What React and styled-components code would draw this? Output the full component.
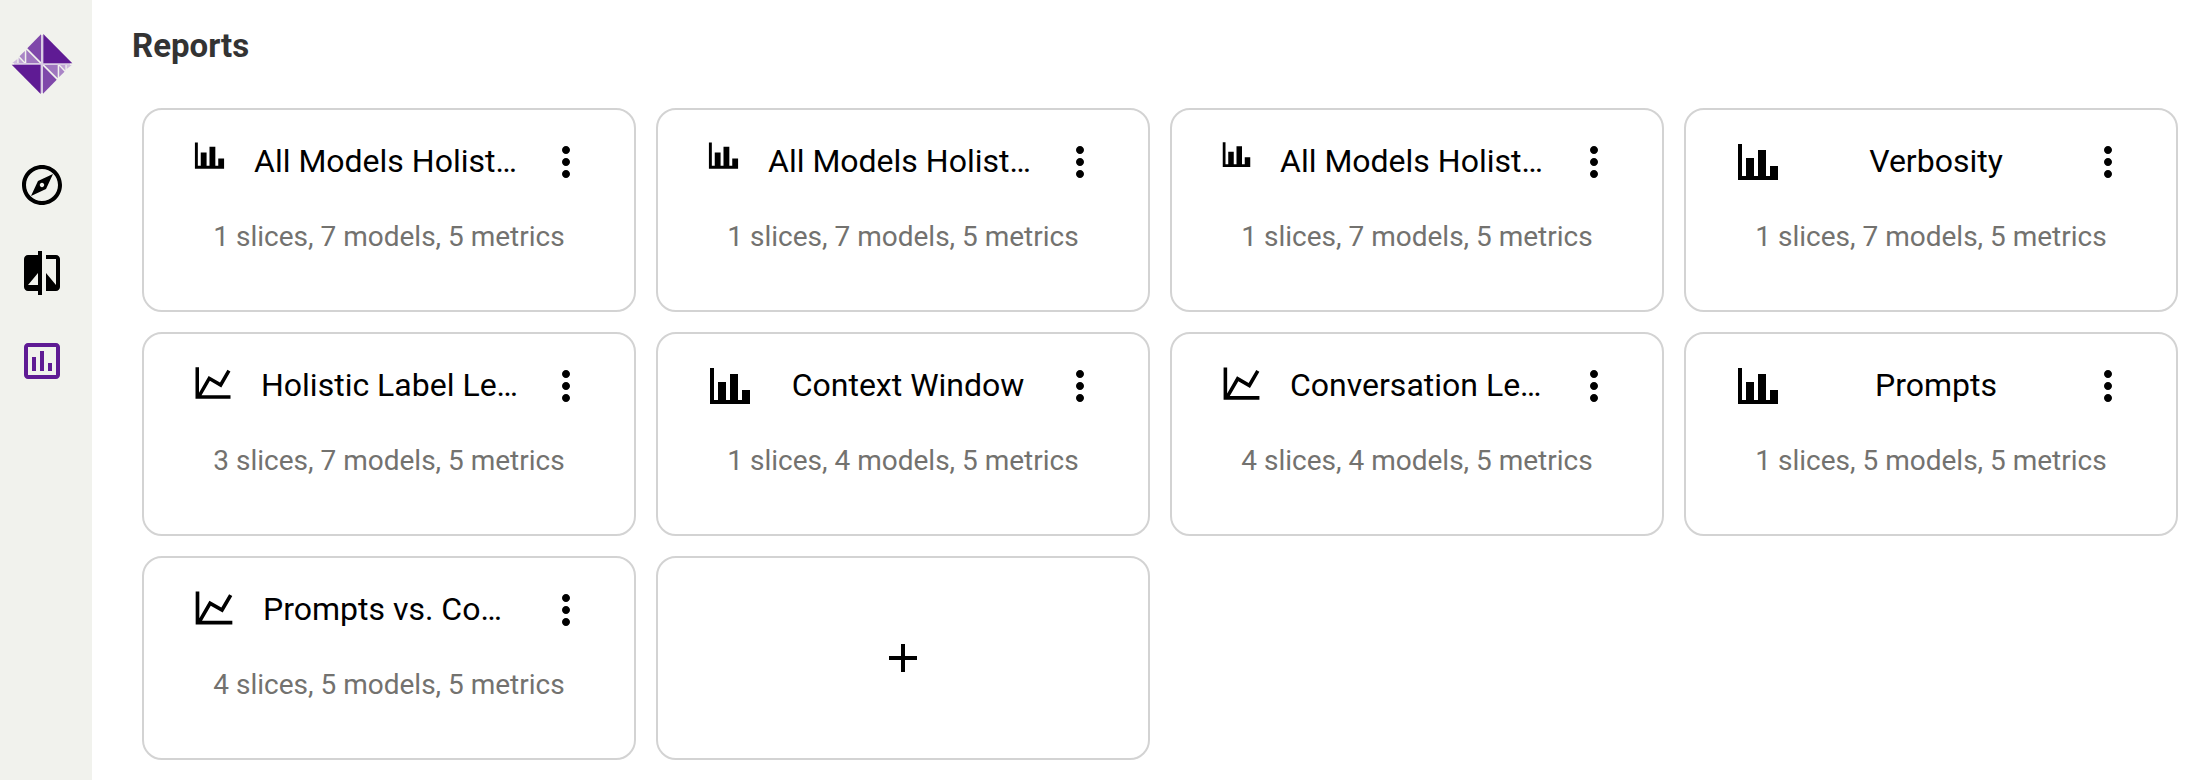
import React from "react";
import styled, { createGlobalStyle } from "styled-components";

const GlobalStyle = createGlobalStyle`
  * { box-sizing: border-box; }
  body {
    margin: 0;
    background: #ffffff;
    color: #000000;
    font-family: Roboto, "Liberation Sans", sans-serif;
  }
`;

const Page = styled.div`
  display: flex;
  min-height: 100vh;
`;

const Sidebar = styled.nav`
  flex: 0 0 92px;
  display: flex;
  flex-direction: column;
  align-items: center;
  padding: 32px 8px 0 0;
  background: #f1f2ed;
`;

const LogoLink = styled.a`
  display: block;
  height: 64px;
  margin-bottom: 65px;
`;

const NavList = styled.div`
  display: flex;
  flex-direction: column;
  gap: 40px;
`;

const NavLink = styled.a`
  display: block;
  height: 48px;
  color: ${(p) => (p.$active ? "#5f1b94" : "#000000")};
`;

const Main = styled.main`
  flex: 1;
  min-width: 0;
  padding: 28px 22px 20px 40px;
`;

const Heading = styled.h1`
  margin: 0 0 44px;
  color: #333333;
  font-size: 33px;
  font-weight: 700;
  line-height: 36px;
`;

const CardGrid = styled.div`
  display: grid;
  grid-template-columns: repeat(auto-fill, minmax(420px, 1fr));
  gap: 20px;
  padding-left: 10px;
`;

const Card = styled.article`
  min-height: 204px;
  padding: 28px 44px 28px 48px;
  border: 2px solid #d3d3d3;
  border-radius: 20px;
`;

const CardHeader = styled.div`
  display: flex;
  align-items: flex-start;
  height: 48px;
`;

const Title = styled.h2`
  flex: 1;
  min-width: 0;
  margin: 0 21px 0 27px;
  overflow: hidden;
  font-size: 32px;
  font-weight: 400;
  line-height: 46px;
  white-space: nowrap;
  text-align: ${(p) => (p.$cut ? "left" : "center")};
`;

const MenuButton = styled.button`
  flex: none;
  height: 48px;
  padding: 0;
  border: 0;
  background: none;
  color: inherit;
  cursor: pointer;
`;

const Summary = styled.p`
  margin: 35px 0 0;
  padding-right: 4px;
  color: #73726f;
  font-size: 28px;
  line-height: 32px;
  text-align: center;
  white-space: nowrap;
`;

const AddCard = styled.button`
  display: flex;
  align-items: center;
  justify-content: center;
  min-height: 204px;
  padding: 0;
  border: 2px solid #d3d3d3;
  border-radius: 20px;
  background: none;
  color: inherit;
  cursor: pointer;
`;

const Svg = styled.svg`
  display: block;
  flex: none;
  fill: currentColor;
`;

const ICONS = {
  explore:
    "M12 2C6.48 2 2 6.48 2 12s4.48 10 10 10 10-4.48 10-10S17.52 2 12 2zm0 18c-4.41 0-8-3.59-8-8s3.59-8 8-8 8 3.59 8 8-3.59 8-8 8zm-5.5-2.5l7.51-3.49L17.5 6.5 9.99 9.99 6.5 17.5zm5.5-6.6c.61 0 1.1.49 1.1 1.1s-.49 1.1-1.1 1.1-1.1-.49-1.1-1.1.49-1.1 1.1-1.1z",
  compare:
    "M10 3H5c-1.1 0-2 .9-2 2v14c0 1.1.9 2 2 2h5v2h2V1h-2v2zm0 15H5l5-6v6zm9-15h-5v2h5v13l-5-6v9h5c1.1 0 2-.9 2-2V5c0-1.1-.9-2-2-2z",
  report:
    "M9 17H7v-7h2v7zm4 0h-2V7h2v10zm4 0h-2v-4h2v4zm2 2H5V5h14v14zm0-16H5c-1.1 0-2 .9-2 2v14c0 1.1.9 2 2 2h14c1.1 0 2-.9 2-2V5c0-1.1-.9-2-2-2z",
  bar: "M22 21H2V3h2v16h2v-9h4v9h2V6h4v13h2v-5h4z",
  line: "M16 11.78l4.24-7.33 1.73 1-5.23 9.05-6.51-3.75L5.46 19H22v2H2V3h2v14.54L9.5 8z",
  menu: "M12 8c1.1 0 2-.9 2-2s-.9-2-2-2-2 .9-2 2 .9 2 2 2zm0 2c-1.1 0-2 .9-2 2s.9 2 2 2 2-.9 2-2-.9-2-2-2zm0 6c-1.1 0-2 .9-2 2s.9 2 2 2 2-.9 2-2-.9-2-2-2z",
  add: "M19 13h-6v6h-2v-6H5v-2h6V5h2v6h6v2z",
};

function Icon({ name, size = 48 }) {
  return (
    <Svg viewBox="0 0 24 24" width={size} height={size} aria-hidden="true">
      <path d={ICONS[name]} />
    </Svg>
  );
}

function Logo() {
  return (
    <Svg viewBox="0 0 64 64" width="64" height="64" aria-hidden="true">
      <path fill="#d9cce4" d="M31 3h2v58h-2zM4 31h56v2H4z" />
      <g id="logo-half">
        <path fill="#5f1b94" d="M33.3 2V31.200H62.300z" />
        <path fill="#7f48aa" d="M31 2.300V30L17.300 16.200z" />
        <path fill="#9f76bf" d="M16.300 17.700V31H29.600z" />
        <path fill="#a985c6" d="M14.800 19V30l-5.300-5.700z" />
        <path fill="#bfa4d4" d="M8.600 25.500V31H14z" />
        <path fill="#cfbbde" d="M7.300 27v4H2.300z" />
      </g>
      <use href="#logo-half" transform="rotate(180 32 32)" />
    </Svg>
  );
}

const REPORTS = [
  { icon: "bar", size: 35, title: "All Models Holist…", slices: 1, models: 7 },
  { icon: "bar", size: 35, title: "All Models Holist…", slices: 1, models: 7 },
  { icon: "bar", size: 33, title: "All Models Holist…", slices: 1, models: 7 },
  { icon: "bar", size: 48, title: "Verbosity", slices: 1, models: 7 },
  { icon: "line", size: 42, title: "Holistic Label Le…", slices: 3, models: 7 },
  { icon: "bar", size: 48, title: "Context Window", slices: 1, models: 4 },
  { icon: "line", size: 43, title: "Conversation Le…", slices: 4, models: 4 },
  { icon: "bar", size: 48, title: "Prompts", slices: 1, models: 5 },
  { icon: "line", size: 44, title: "Prompts vs. Co…", slices: 4, models: 5 },
];

function ReportCard({ report }) {
  return (
    <Card>
      <CardHeader>
        <Icon name={report.icon} size={report.size} />
        <Title $cut={report.title.endsWith("…")}>{report.title}</Title>
        <MenuButton type="button" aria-label="Report options">
          <Icon name="menu" />
        </MenuButton>
      </CardHeader>
      <Summary>{`${report.slices} slices, ${report.models} models, 5 metrics`}</Summary>
    </Card>
  );
}

export default function App() {
  return (
    <Page>
      <GlobalStyle />
      <Sidebar>
        <LogoLink href="#home" aria-label="Home">
          <Logo />
        </LogoLink>
        <NavList>
          <NavLink href="#explore" aria-label="Explore">
            <Icon name="explore" />
          </NavLink>
          <NavLink href="#compare" aria-label="Compare">
            <Icon name="compare" />
          </NavLink>
          <NavLink href="#reports" aria-label="Reports" $active>
            <Icon name="report" />
          </NavLink>
        </NavList>
      </Sidebar>
      <Main>
        <Heading>Reports</Heading>
        <CardGrid>
          {REPORTS.map((report, i) => (
            <ReportCard key={i} report={report} />
          ))}
          <AddCard type="button" aria-label="New report">
            <Icon name="add" />
          </AddCard>
        </CardGrid>
      </Main>
    </Page>
  );
}
